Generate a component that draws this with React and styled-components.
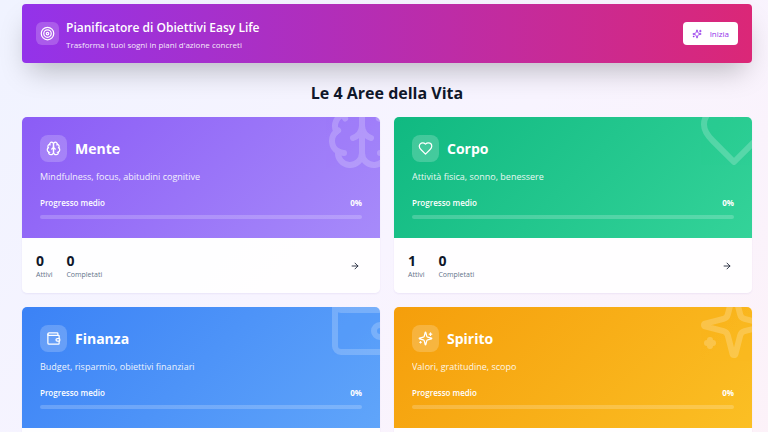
import React from 'react';
import styled, { createGlobalStyle } from 'styled-components';
import { ArrowRight, Target, Wallet } from 'lucide-react';

const colors = {
  ink: '#0f172a',
  muted: '#64748b',
  purple: '#9333ea',
  pink: '#db2777',
  white: '#ffffff',
};

const GlobalStyle = createGlobalStyle`
  *,
  *:before,
  *:after {
    box-sizing: border-box;
  }

  body {
    margin: 0;
    font-family: 'Open Sans', 'Noto Sans', sans-serif;
    color: ${colors.ink};
  }

  h1, h2, h3, p, dl, dd {
    margin: 0;
  }
`;

const Page = styled.main`
  background: linear-gradient(135deg, #f0f3ff 0%, #f8f4ff 50%, #fdf2f8 100%);
  display: flex;
  flex-direction: column;
  min-height: 100vh;
  padding: 4px 16px 16px 22px;
`;

const Hero = styled.header`
  align-items: center;
  background: linear-gradient(90deg, ${colors.purple}, ${colors.pink});
  border-radius: 4px;
  box-shadow: 0 14px 28px -7px rgba(0, 0, 0, 0.25);
  color: ${colors.white};
  display: flex;
  gap: 7px;
  min-height: 59px;
  padding: 8px 14px;
`;

const IconBox = styled.span`
  align-items: center;
  background: rgba(255, 255, 255, 0.2);
  border-radius: ${props => (props.$large ? 8 : 6)}px;
  display: flex;
  flex: none;
  height: ${props => (props.$large ? 27 : 23)}px;
  justify-content: center;
  width: ${props => (props.$large ? 27 : 23)}px;
`;

const HeroText = styled.div`
  flex: 1;
  padding-top: 4px;
`;

const HeroTitle = styled.h1`
  font-size: 12px;
  font-weight: 600;
  line-height: 18px;
`;

const HeroSubtitle = styled.p`
  font-size: 8px;
  line-height: 15px;
  opacity: 0.9;
`;

const StartButton = styled.button`
  align-items: center;
  background: ${colors.white};
  border: none;
  border-radius: 4px;
  color: ${colors.purple};
  cursor: pointer;
  display: flex;
  font-family: inherit;
  font-size: 8px;
  font-weight: 500;
  gap: 8px;
  height: 23px;
  padding: 0 9px;
`;

const SectionTitle = styled.h2`
  font-size: 16px;
  font-weight: 700;
  line-height: 24px;
  margin: 18px 0 12px;
  text-align: center;
`;

const AreaGrid = styled.section`
  display: grid;
  gap: 14px;
  grid-template-columns: 1fr 1fr;
`;

const Card = styled.article`
  background: rgba(255, 255, 255, 0.9);
  border-radius: 5px;
  box-shadow: 0 1px 2px rgba(76, 29, 149, 0.07);
  overflow: hidden;
`;

const CardHead = styled.div`
  background: linear-gradient(135deg, ${props => props.$from}, ${props => props.$to});
  color: ${colors.white};
  overflow: hidden;
  padding: 18px 18px 19px;
  position: relative;
`;

const Watermark = styled.div`
  height: 72px;
  opacity: 0.2;
  position: absolute;
  right: -18px;
  top: -18px;
  width: 72px;
`;

const CardTitleRow = styled.div`
  align-items: center;
  display: flex;
  gap: 8px;
`;

const CardTitle = styled.h3`
  font-size: 14px;
  font-weight: 700;
  line-height: 20px;
`;

const Description = styled.p`
  font-size: 9px;
  line-height: 14px;
  margin-top: 8px;
  opacity: 0.9;
`;

const ProgressRow = styled.div`
  display: flex;
  font-size: 8px;
  font-weight: 600;
  justify-content: space-between;
  line-height: 12px;
  margin-top: 13px;
`;

const ProgressValue = styled.span`
  font-weight: 700;
`;

const Track = styled.div`
  background: rgba(255, 255, 255, 0.2);
  border-radius: 2px;
  height: 4px;
  margin-top: 6px;
  overflow: hidden;
`;

const TrackFill = styled.div`
  background: ${colors.white};
  height: 100%;
`;

const CardFoot = styled.div`
  align-items: center;
  display: flex;
  justify-content: space-between;
  padding: 14px;
`;

const Stats = styled.dl`
  display: flex;
  gap: 14px;
`;

const Stat = styled.div`
  display: flex;
  flex-direction: column-reverse;
`;

const StatValue = styled.dd`
  font-size: 14px;
  font-weight: 700;
  line-height: 18px;
`;

const StatLabel = styled.dt`
  color: ${colors.muted};
  font-size: 7px;
  font-weight: 500;
  line-height: 9px;
`;

const OpenButton = styled.button`
  align-items: center;
  background: none;
  border: none;
  color: ${colors.ink};
  cursor: pointer;
  display: flex;
  height: 22px;
  justify-content: center;
  padding: 0;
  width: 22px;
`;

const Glyph = ({ size = '100%', paths }) => (
  <svg
    width={size}
    height={size}
    viewBox="0 0 24 24"
    fill="none"
    stroke="currentColor"
    strokeWidth="2"
    strokeLinecap="round"
    strokeLinejoin="round"
    display="block"
    aria-hidden="true"
  >
    {paths.map(d => (
      <path key={d} d={d} />
    ))}
  </svg>
);

const Brain = ({ size }) => (
  <Glyph
    size={size}
    paths={[
      'M12 5a3 3 0 1 0-5.997.125 4 4 0 0 0-2.526 5.77 4 4 0 0 0 .556 6.588A4 4 0 1 0 12 18Z',
      'M12 5a3 3 0 1 1 5.997.125 4 4 0 0 1 2.526 5.77 4 4 0 0 1-.556 6.588A4 4 0 1 1 12 18Z',
      'M15 13a4.5 4.5 0 0 1-3-4 4.5 4.5 0 0 1-3 4',
      'M17.599 6.5a3 3 0 0 0 .399-1.375',
      'M6.003 5.125A3 3 0 0 0 6.401 6.5',
      'M3.477 10.896a4 4 0 0 1 .585-.396',
      'M19.938 10.5a4 4 0 0 1 .585.396',
      'M6 18a4 4 0 0 1-1.967-.516',
      'M19.967 17.484A4 4 0 0 1 18 18',
    ]}
  />
);

const Heart = ({ size }) => (
  <Glyph
    size={size}
    paths={[
      'M19 14c1.49-1.46 3-3.21 3-5.5A5.5 5.5 0 0 0 16.5 3c-1.76 0-3 .5-4.5 2-1.5-1.5-2.74-2-4.5-2A5.5 5.5 0 0 0 2 8.5c0 2.3 1.5 4.05 3 5.5l7 7Z',
    ]}
  />
);

const Sparkles = ({ size }) => (
  <Glyph
    size={size}
    paths={[
      'M9.937 15.5A2 2 0 0 0 8.5 14.063l-6.135-1.582a.5.5 0 0 1 0-.962L8.5 9.936A2 2 0 0 0 9.937 8.5l1.582-6.135a.5.5 0 0 1 .963 0L14.063 8.5A2 2 0 0 0 15.5 9.937l6.135 1.581a.5.5 0 0 1 0 .964L15.5 14.063a2 2 0 0 0-1.437 1.437l-1.582 6.135a.5.5 0 0 1-.963 0z',
      'M20 3v4',
      'M22 5h-4',
      'M4 17v2',
      'M5 18H3',
    ]}
  />
);

const areas = [
  {
    name: 'Mente',
    description: 'Mindfulness, focus, abitudini cognitive',
    icon: Brain,
    from: '#8b5cf6',
    to: '#a78bfa',
    progress: 0,
    active: 0,
    completed: 0,
  },
  {
    name: 'Corpo',
    description: 'Attività fisica, sonno, benessere',
    icon: Heart,
    from: '#10b981',
    to: '#34d399',
    progress: 0,
    active: 1,
    completed: 0,
  },
  {
    name: 'Finanza',
    description: 'Budget, risparmio, obiettivi finanziari',
    icon: Wallet,
    from: '#3b82f6',
    to: '#60a5fa',
    progress: 0,
    active: 0,
    completed: 0,
  },
  {
    name: 'Spirito',
    description: 'Valori, gratitudine, scopo',
    icon: Sparkles,
    from: '#f59e0b',
    to: '#fbbf24',
    progress: 0,
    active: 0,
    completed: 0,
  },
];

const AreaCard = ({ area }) => {
  const Icon = area.icon;

  return (
    <Card>
      <CardHead $from={area.from} $to={area.to}>
        <Watermark>
          <Icon size="100%" />
        </Watermark>
        <CardTitleRow>
          <IconBox $large>
            <Icon size={15} />
          </IconBox>
          <CardTitle>{area.name}</CardTitle>
        </CardTitleRow>
        <Description>{area.description}</Description>
        <ProgressRow>
          <span>Progresso medio</span>
          <ProgressValue>{area.progress}%</ProgressValue>
        </ProgressRow>
        <Track>
          <TrackFill style={{ width: `${area.progress}%` }} />
        </Track>
      </CardHead>
      <CardFoot>
        <Stats>
          <Stat>
            <StatLabel>Attivi</StatLabel>
            <StatValue>{area.active}</StatValue>
          </Stat>
          <Stat>
            <StatLabel>Completati</StatLabel>
            <StatValue>{area.completed}</StatValue>
          </Stat>
        </Stats>
        <OpenButton type="button" aria-label={`Apri ${area.name}`}>
          <ArrowRight size={10} />
        </OpenButton>
      </CardFoot>
    </Card>
  );
};

const App = () => (
  <>
    <GlobalStyle />
    <Page>
      <Hero>
        <IconBox>
          <Target size={15} />
        </IconBox>
        <HeroText>
          <HeroTitle>Pianificatore di Obiettivi Easy Life</HeroTitle>
          <HeroSubtitle>Trasforma i tuoi sogni in piani d'azione concreti</HeroSubtitle>
        </HeroText>
        <StartButton type="button">
          <Sparkles size={10} />
          Inizia
        </StartButton>
      </Hero>
      <SectionTitle>Le 4 Aree della Vita</SectionTitle>
      <AreaGrid>
        {areas.map(area => (
          <AreaCard key={area.name} area={area} />
        ))}
      </AreaGrid>
    </Page>
  </>
);

export default App;
